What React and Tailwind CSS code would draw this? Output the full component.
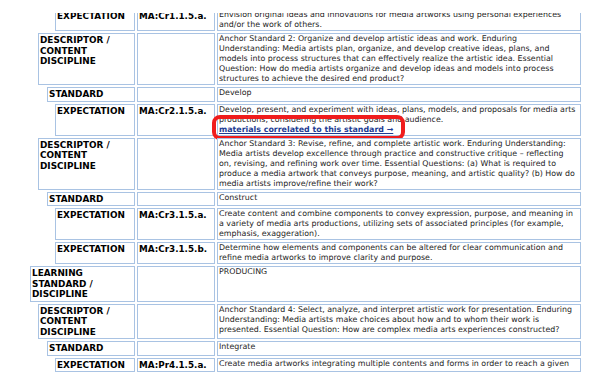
import React from "react";

const indents = {
  1: "pl-[30px]",
  2: "pl-[38px]",
  3: "pl-[47px]",
  4: "pl-[55px]",
};

const rows = [
  {
    level: 4,
    label: ["EXPECTATION"],
    code: "MA:Cr1.1.5.a.",
    lines: [
      "Envision original ideas and innovations for media artworks using personal experiences",
      "and/or the work of others.",
    ],
  },
  {
    level: 2,
    label: ["DESCRIPTOR /", "CONTENT", "DISCIPLINE"],
    code: "",
    lines: [
      "Anchor Standard 2: Organize and develop artistic ideas and work. Enduring",
      "Understanding: Media artists plan, organize, and develop creative ideas, plans, and",
      "models into process structures that can effectively realize the artistic idea. Essential",
      "Question: How do media artists organize and develop ideas and models into process",
      "structures to achieve the desired end product?",
    ],
  },
  { level: 3, label: ["STANDARD"], code: "", lines: ["Develop"] },
  {
    level: 4,
    label: ["EXPECTATION"],
    code: "MA:Cr2.1.5.a.",
    lines: [
      "Develop, present, and experiment with ideas, plans, models, and proposals for media arts",
      "productions, considering the artistic goals and audience.",
    ],
    link: true,
  },
  {
    level: 2,
    label: ["DESCRIPTOR /", "CONTENT", "DISCIPLINE"],
    code: "",
    lines: [
      "Anchor Standard 3: Revise, refine, and complete artistic work. Enduring Understanding:",
      "Media artists develop excellence through practice and constructive critique – reflecting",
      "on, revising, and refining work over time. Essential Questions: (a) What is required to",
      "produce a media artwork that conveys purpose, meaning, and artistic quality? (b) How do",
      "media artists improve/refine their work?",
    ],
  },
  { level: 3, label: ["STANDARD"], code: "", lines: ["Construct"] },
  {
    level: 4,
    label: ["EXPECTATION"],
    code: "MA:Cr3.1.5.a.",
    lines: [
      "Create content and combine components to convey expression, purpose, and meaning in",
      "a variety of media arts productions, utilizing sets of associated principles (for example,",
      "emphasis, exaggeration).",
    ],
  },
  {
    level: 4,
    label: ["EXPECTATION"],
    code: "MA:Cr3.1.5.b.",
    lines: [
      "Determine how elements and components can be altered for clear communication and",
      "refine media artworks to improve clarity and purpose.",
    ],
  },
  {
    level: 1,
    label: ["LEARNING", "STANDARD /", "DISCIPLINE"],
    code: "",
    lines: ["PRODUCING"],
  },
  {
    level: 2,
    label: ["DESCRIPTOR /", "CONTENT", "DISCIPLINE"],
    code: "",
    lines: [
      "Anchor Standard 4: Select, analyze, and interpret artistic work for presentation. Enduring",
      "Understanding: Media artists make choices about how and to whom their work is",
      "presented. Essential Question: How are complex media arts experiences constructed?",
    ],
  },
  { level: 3, label: ["STANDARD"], code: "", lines: ["Integrate"] },
  {
    level: 4,
    label: ["EXPECTATION"],
    code: "MA:Pr4.1.5.a.",
    lines: [
      "Create media artworks integrating multiple contents and forms in order to reach a given",
    ],
  },
];

const cell = "border border-[#a9c3e3] bg-white";

const Row = ({ level, label, code, lines, link }) => (
  <div className={`flex gap-[2px] ${indents[level]}`}>
    <div className={`${cell} flex-1 px-[1px] py-[1px] text-[8.9px] leading-[10.5px] font-bold text-black`}>
      {label.map((l) => (
        <div key={l} className="whitespace-nowrap">{l}</div>
      ))}
    </div>
    <div className={`${cell} w-[78px] px-[1px] py-[1px] text-[8.8px] leading-[10.5px] font-bold text-black whitespace-nowrap`}>
      {code}
    </div>
    <div className={`${cell} relative w-[364px] pl-[1px] text-[7.9px] leading-[10px] text-[#1e1e1e]`}>
      {lines.map((l) => (
        <div key={l} className="whitespace-nowrap">{l}</div>
      ))}
      {link && (
        <>
          <div className="whitespace-nowrap">
            <a href="#" className="font-bold text-[#1d3c93] underline">
              materials correlated to this standard →
            </a>
          </div>
          {/* highlight drawn over the screenshot */}
          <div className="absolute left-[-6px] top-[10px] w-[193px] h-[25px] rounded-[8px] border-[4px] border-[#f01c1c]" />
        </>
      )}
    </div>
  </div>
);

export default function App() {
  return (
    <div
      className="w-[600px] h-[372px] overflow-hidden bg-white"
      style={{ fontFamily: '"DejaVu Sans", Verdana, sans-serif' }}
    >
      <div className="h-[13px] bg-white" />
      <div className="h-[359px] overflow-hidden">
        <div className="-mt-[4px] w-[581px] flex flex-col gap-[2px]">
          {rows.map((r, i) => (
            <Row key={i} {...r} />
          ))}
        </div>
      </div>
    </div>
  );
}
